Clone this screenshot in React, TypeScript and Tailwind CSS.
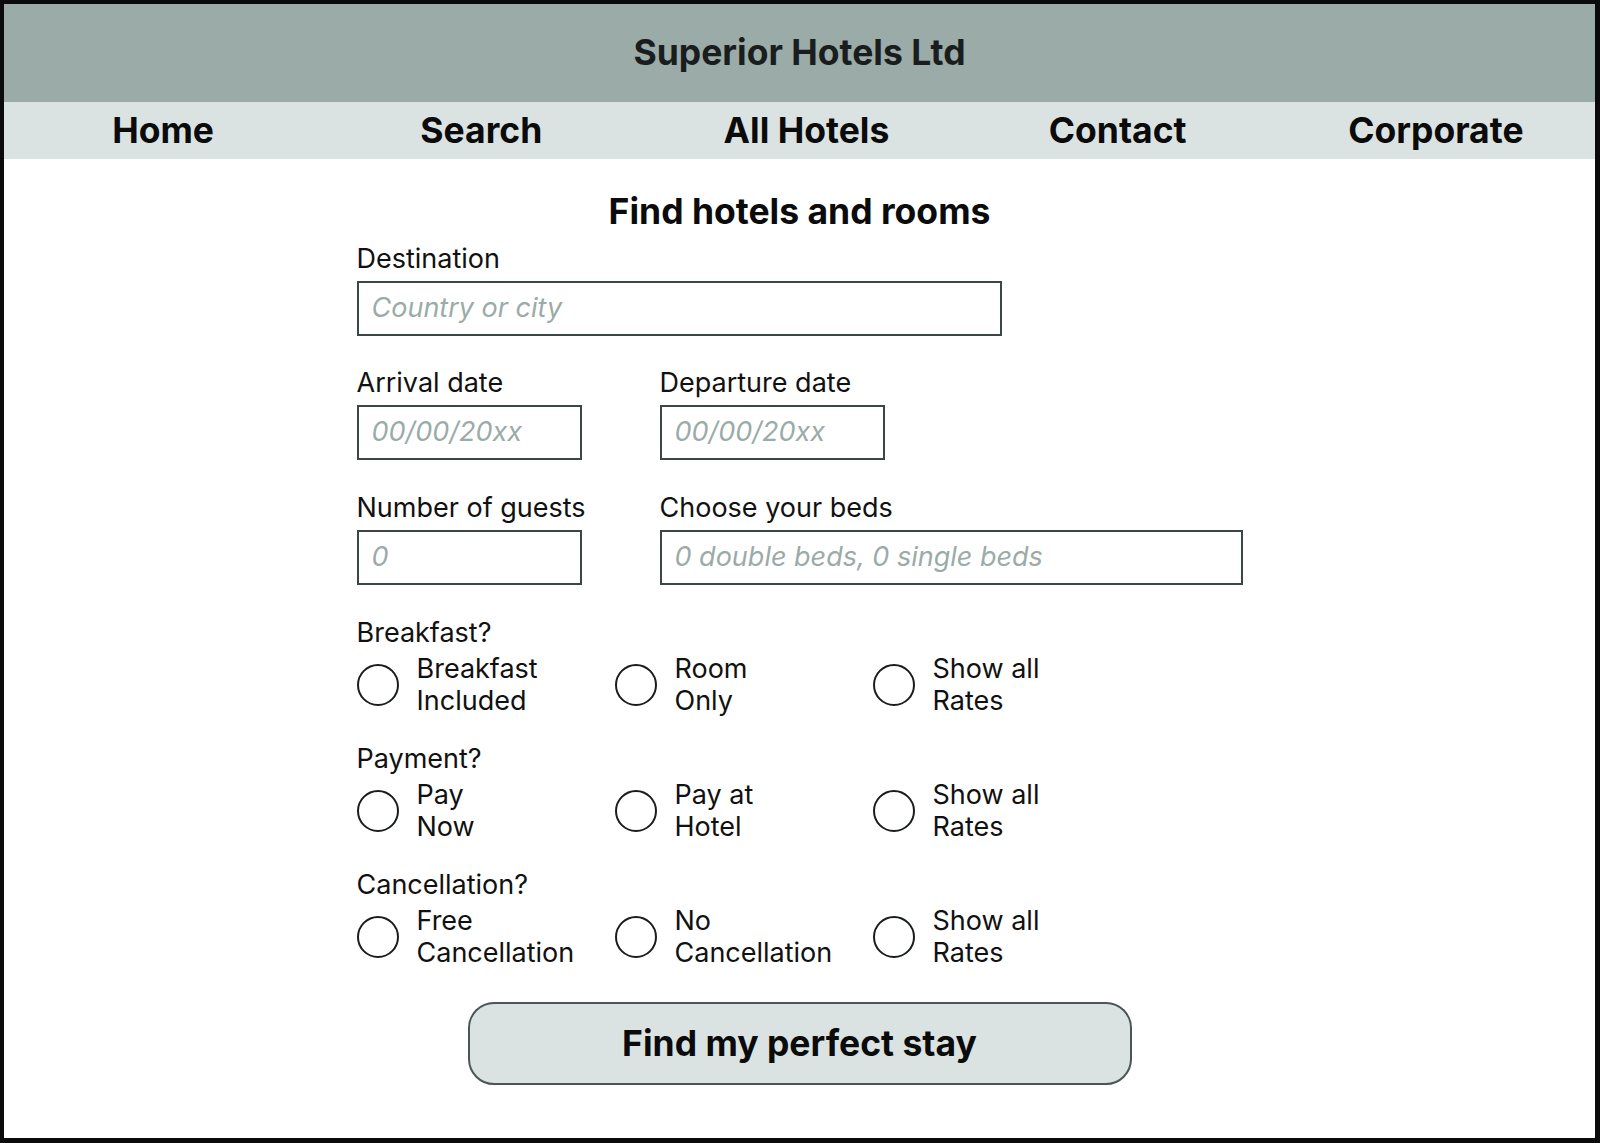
import React from 'react';

const navItems = ['Home', 'Search', 'All Hotels', 'Contact', 'Corporate'];

const radioGroups = [
  { label: 'Breakfast?', options: [['Breakfast', 'Included'], ['Room', 'Only'], ['Show all', 'Rates']] },
  { label: 'Payment?', options: [['Pay', 'Now'], ['Pay at', 'Hotel'], ['Show all', 'Rates']] },
  { label: 'Cancellation?', options: [['Free', 'Cancellation'], ['No', 'Cancellation'], ['Show all', 'Rates']] },
];

function Field({ label, placeholder, width }: { label: string; placeholder: string; width: string }) {
  return (
    <div className={`flex flex-col ${width}`}>
      <label className="whitespace-nowrap text-[27px] leading-[34px] text-[#111]">{label}</label>
      <div className="mt-[5px] h-[55px] w-full border-2 border-[#3d4646] flex items-center px-[13px]">
        <span className="italic whitespace-nowrap text-[27px] text-[#9aaba8]">{placeholder}</span>
      </div>
    </div>
  );
}

export default function App() {
  return (
    <div
      className="w-[1600px] h-[1143px] bg-[#0b0b0b] p-[4px] pr-[5px] pb-[5px]"
      style={{ fontFamily: 'Inter, "Liberation Sans", sans-serif' }}
    >
      <div className="h-full bg-white flex flex-col">
        <header className="h-[98px] bg-[#9aaba8] flex items-center justify-center">
          <h1 className="text-[35.5px] font-bold text-[#1a1d1d]">Superior Hotels Ltd</h1>
        </header>
        <nav className="h-[57px] bg-[#dbe3e2] grid grid-cols-5 items-center">
          {navItems.map((item, i) => (
            <a key={item} className={`text-center text-[35.5px] font-bold text-[#0b0b0b] ${i === 2 ? 'pl-[14px]' : ''}`}>
              {item}
            </a>
          ))}
        </nav>

        <main className="w-[886px] mx-auto pt-[31px]">
          <h2 className="text-center text-[35.5px] leading-[44px] font-bold text-[#0b0b0b]">Find hotels and rooms</h2>

          <div className="mt-[8px]">
            <Field label="Destination" placeholder="Country or city" width="w-[645px]" />
          </div>

          <div className="mt-[30px] flex gap-[78px]">
            <Field label="Arrival date" placeholder="00/00/20xx" width="w-[225px]" />
            <Field label="Departure date" placeholder="00/00/20xx" width="w-[225px]" />
          </div>

          <div className="mt-[31px] flex gap-[78px]">
            <Field label="Number of guests" placeholder="0" width="w-[225px]" />
            <Field label="Choose your beds" placeholder="0 double beds, 0 single beds" width="w-[583px]" />
          </div>

          <div className="mt-[31px] flex flex-col gap-[25px]">
            {radioGroups.map((group) => (
              <div key={group.label}>
                <div className="text-[27px] leading-[34px] text-[#111]">{group.label}</div>
                <div className="mt-[3px] grid grid-cols-[258px_258px_258px]">
                  {group.options.map(([a, b], idx) => (
                    <label key={idx} className="flex items-center">
                      <span className="w-[42px] h-[42px] rounded-full border-2 border-[#1a1d1d] shrink-0" />
                      <span className="ml-[18px] whitespace-nowrap text-[27px] leading-[32px] text-[#111]">
                        {a}
                        <br />
                        {b}
                      </span>
                    </label>
                  ))}
                </div>
              </div>
            ))}
          </div>

          <div className="mt-[33px] flex justify-center">
            <button className="w-[664px] h-[83px] rounded-[26px] border-2 border-[#4a5555] bg-[#dbe3e2] text-[35.5px] font-bold text-[#0b0b0b]">
              Find my perfect stay
            </button>
          </div>
        </main>
      </div>
    </div>
  );
}
